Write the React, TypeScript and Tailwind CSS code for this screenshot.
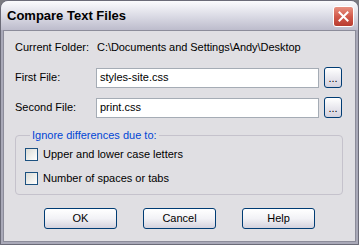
import { FC } from "react";

const font = "font-['Liberation_Sans',Arial,sans-serif]";

const XpButton: FC<{ label: string; className?: string }> = ({ label, className }) => (
    <button
        className={`h-[21px] rounded-[3px] border border-[#003c74] bg-gradient-to-b from-white via-[#f2f2f6] to-[#d4d2de] text-[11px] text-black ${className ?? ""}`}
    >
        {label}
    </button>
);

const Checkbox: FC<{ label: string }> = ({ label }) => (
    <label className="flex items-center gap-[5px] h-[13px]">
        <span className="w-[13px] h-[13px] border border-[#1c5180] bg-gradient-to-br from-[#dcdcd6] to-white" />
        <span className="text-[11px] text-black">{label}</span>
    </label>
);

const App: FC = () => {
    return <div className={`w-[359px] h-[245px] bg-[#7a7a80] ${font}`}>
        <div className="w-[359px] h-[245px] flex flex-col rounded-t-[8px] bg-[#a9a9b8] border border-[#6b6b78]">
            {/* title bar */}
            <div className="h-[29px] shrink-0 flex items-center justify-between pl-[6px] pr-[4px] rounded-t-[7px] bg-gradient-to-b from-[#fbfbfd] via-[#dcdce6] to-[#bdbccc]">
                <span className="text-[13px] font-bold text-black">Compare Text Files</span>
                <div className="w-[21px] h-[21px] mt-[1px] rounded-[3px] border border-white bg-gradient-to-b from-[#e79080] via-[#d25a4c] to-[#b83c30] flex items-center justify-center">
                    <svg width="11" height="11" viewBox="0 0 11 11">
                        <path d="M1.5 1.5 L9.5 9.5 M9.5 1.5 L1.5 9.5" stroke="white" strokeWidth="2" strokeLinecap="square" />
                    </svg>
                </div>
            </div>
            {/* client area */}
            <div className="flex-1 mx-[2px] mb-[2px] border border-[#8c8c9a] bg-[#e0dfe3] px-[11px] pt-[6px] flex flex-col text-[11px] text-black">
                <div className="flex items-center h-[20px]">
                    <span className="w-[81px]">Current Folder:</span>
                    <span className="pl-[1px] tracking-[-0.05px]">C:\Documents and Settings\Andy\Desktop</span>
                </div>
                <div className="flex items-center h-[21px] mt-[10px]">
                    <span className="w-[81px]">First File:</span>
                    <div className="w-[223px] h-[20px] border border-[#a5acb5] bg-white flex items-center pl-[3px]">styles-site.css</div>
                    <button className="ml-[5px] w-[18px] h-[21px] rounded-[3px] border border-[#003c74] bg-gradient-to-b from-white to-[#d4d2de] text-[11px] leading-none pt-[2px]">...</button>
                </div>
                <div className="flex items-center h-[21px] mt-[9px]">
                    <span className="w-[81px]">Second File:</span>
                    <div className="w-[223px] h-[20px] border border-[#a5acb5] bg-white flex items-center pl-[3px]">print.css</div>
                    <button className="ml-[5px] w-[18px] h-[21px] rounded-[3px] border border-[#003c74] bg-gradient-to-b from-white to-[#d4d2de] text-[11px] leading-none pt-[2px]">...</button>
                </div>
                <fieldset className="mt-[9px] w-[328px] h-[68px] border border-[#c5c2cc] rounded-[4px] pl-[9px] pt-[4px] flex flex-col gap-[11px]">
                    <legend className="ml-[5px] px-[2px] text-[11px] text-[#0046d5]">Ignore differences due to:</legend>
                    <Checkbox label="Upper and lower case letters" />
                    <Checkbox label="Number of spaces or tabs" />
                </fieldset>
                <div className="flex justify-center gap-[26px] mt-[13px]">
                    <XpButton label="OK" className="w-[73px]" />
                    <XpButton label="Cancel" className="w-[73px]" />
                    <XpButton label="Help" className="w-[73px]" />
                </div>
            </div>
        </div>
    </div>
};

export default App;
